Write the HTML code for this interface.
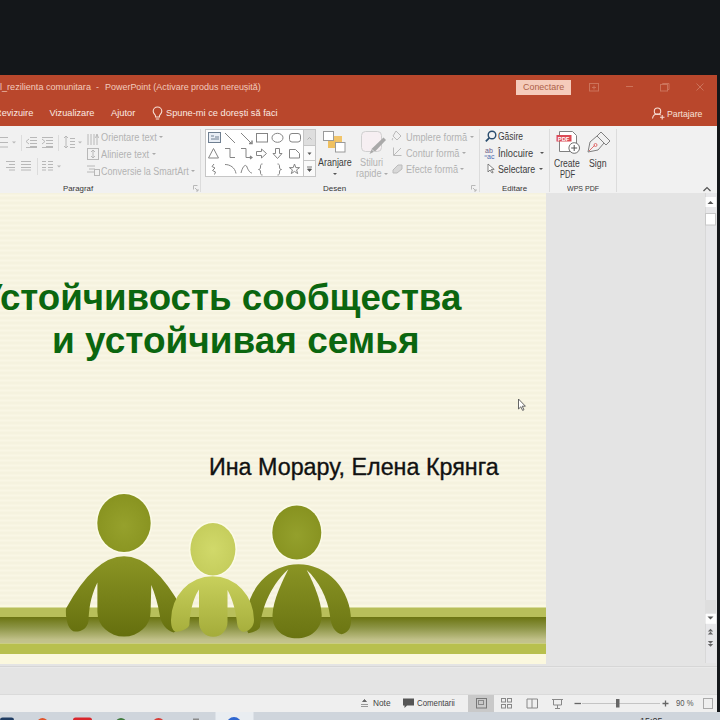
<!DOCTYPE html>
<html><head><meta charset="utf-8">
<style>
*{margin:0;padding:0;box-sizing:border-box}
html,body{width:720px;height:720px;overflow:hidden;background:#14171a;font-family:"Liberation Sans",sans-serif}
.a{position:absolute;white-space:nowrap}
#top{left:0;top:0;width:720px;height:75px;background:#14171a}
#orange{left:0;top:75px;width:717px;height:51px;background:#b9472c}
#ribbon{left:0;top:126px;width:717px;height:67px;background:#f1f1f1}
#panel{left:0;top:193px;width:717px;height:502px;background:#e4e4e4}
#slide{left:0;top:193px;width:546px;height:471px;background:repeating-linear-gradient(180deg,#f4f1dd 0px,#f9f6e5 2.5px,#f4f1dd 5px)}
#status{left:0;top:695px;width:717px;height:17px;background:#efefef}
#taskbar{left:0;top:712px;width:720px;height:8px;background:#cfd5dc}
#rightedge{left:717px;top:0;width:3px;height:712px;background:#14171a}
.tt{color:#f3d2c6;font-size:10.5px}
.tab{color:#fbe9e3;font-size:11px}
.rb{color:#a6a6a6;font-size:10px}
.rl{color:#444;font-size:9px}
.rd{color:#333;font-size:10px}
.t{position:absolute;white-space:nowrap;line-height:10px;font-size:10px;transform-origin:0 0}
.g{color:#b3b3b3}
.k{color:#3d3d3d}
.l8{font-size:8px;line-height:8px;color:#363636}
.dd{position:absolute;width:0;height:0;border-left:2px solid transparent;border-right:2px solid transparent;border-top:2px solid #aaa}
.dk{border-top-color:#555}
.sep{position:absolute;width:1px;background:#dadada}
</style></head><body>
<div class="a" id="top"></div>
<div class="a" id="orange"></div>
<div class="a" id="ribbon"></div>
<div class="a" id="panel"></div>
<div class="a" id="slide"></div>
<div class="a" id="status"></div>
<div class="a" id="taskbar"></div>
<div class="a" id="rightedge"></div>

<!-- title bar -->
<div class="t" style="left:0;top:82.5px;font-size:9px;line-height:9px;color:#f2cbbd;transform:scaleX(1.01)">l_rezilienta comunitara</div>
<div class="t" style="left:96px;top:82.5px;font-size:9px;line-height:9px;color:#f2cbbd">-</div>
<div class="t" style="left:104.5px;top:82.5px;font-size:9px;line-height:9px;color:#f2cbbd;transform:scaleX(0.995)">PowerPoint (Activare produs nereușită)</div>
<div class="a" style="left:516px;top:80px;width:55px;height:14.5px;background:#f5cbbb"></div>
<div class="t" style="left:523px;top:83px;font-size:9px;line-height:9px;color:#ad5f48;transform:scaleX(0.99)">Conectare</div>
<svg class="a" style="left:580px;top:76px" width="137" height="50" viewBox="580 76 137 50">
<g stroke="#cc735a" fill="none" stroke-width="1">
<rect x="589.5" y="83.5" width="9" height="7.5"/><path d="M592,87.5h4M594,85.5v4"/>
<path d="M626,86.5h7"/>
<rect x="660.5" y="84.5" width="7" height="6.5"/><path d="M662.5,84.5v-1h6.5v6h-1"/>
<path d="M696.5,83.5l7,7M703.5,83.5l-7,7"/>
</g>
<g stroke="#f7dcd2" fill="none" stroke-width="1.1">
<circle cx="657.5" cy="111.2" r="3.2"/>
<path d="M652.5,118.5c0.5,-3.5 2.5,-4.5 5,-4.5c1.5,0 2.5,0.3 3.2,1"/>
<path d="M660,117.2h4.5M662.2,115v4.5"/>
</g>
</svg>
<div class="t" style="left:666.5px;top:109.5px;font-size:9.2px;line-height:9.2px;color:#f8e2d9;transform:scaleX(0.95)">Partajare</div>

<!-- tabs -->
<div class="t" style="left:-5px;top:108.5px;font-size:9.2px;line-height:9.2px;color:#fbe9e2">Revizuire</div>
<div class="t" style="left:49.6px;top:108.5px;font-size:9.2px;line-height:9.2px;color:#fbe9e2">Vizualizare</div>
<div class="t" style="left:111px;top:108.5px;font-size:9.3px;line-height:9.3px;color:#fbe9e2">Ajutor</div>
<div class="t" style="left:166px;top:108.5px;font-size:9.25px;line-height:9.25px;color:#fbe9e2">Spune-mi ce dorești să faci</div>
<svg class="a" style="left:150px;top:104px" width="16" height="18" viewBox="150 104 16 18">
<path d="M157.5,107c-2.6,0 -4.3,2 -4.3,4.2c0,1.7 1,2.6 1.8,3.6c0.5,0.7 0.6,1.2 0.6,2.2h3.8c0,-1 0.1,-1.5 0.6,-2.2c0.8,-1 1.8,-1.9 1.8,-3.6c0,-2.2 -1.7,-4.2 -4.3,-4.2z M155.8,119h3.4" stroke="#f7e0d6" fill="none" stroke-width="1.1"/>
</svg>

<!-- ribbon: Paragraf -->
<svg class="a" style="left:0;top:126px" width="717" height="68" viewBox="0 126 717 68">
<g stroke="#b8b8b8" stroke-width="1" fill="none">
<!-- list icon -->
<path d="M0,137.5h8M0,142.5h8M0,147h8"/>
<!-- indent icons -->
<path d="M30,137.5h7M30,140.5h7M30,143.5h7M30,146.5h7M26,147.5h11"/>
<path d="M29,139l-3,2.5l3,2.5"/>
<path d="M42,137.5h11M46,140.5h7M46,143.5h7M46,146.5h7M42,147.5h11"/>
<path d="M42,139l3,2.5l-3,2.5"/>
<!-- line spacing -->
<path d="M66,136v12M64,138l2,-2l2,2M64,146l2,2l2,-2M70,138.5h5M70,141.5h5M70,144.5h5M70,147.5h5"/>
<!-- align right / justify -->
<path d="M6,161.5h9M9,164.5h6M6,167.5h9M9,170h6"/>
<path d="M21,161.5h10M21,164.5h10M21,167.5h10M21,170h10"/>
<!-- columns -->
<path d="M42,161.5h4M48,161.5h5M42,164.5h4M48,164.5h5M42,167.5h4M48,167.5h5M42,170h4M48,170h5"/>
<!-- orientare text icon -->
<path d="M88,134v11M91,134v11M94,134v11M97,136v9M95.5,138l1.5,-4l1.5,4"/>
<!-- aliniere text icon -->
<rect x="87.5" y="148.5" width="11" height="11"/>
<path d="M93,150v8M91,152l2,-2l2,2M91,156l2,2l2,-2"/>
<!-- conversie smartart icon -->
<path d="M87,166h8M89,169h6M87,172h8"/><rect x="94.5" y="169.5" width="5" height="6"/>
<!-- launcher -->
<path d="M193.5,189.5v-4h4M195,188l3,3M198,189v2h-2"/>
<path d="M471.5,189.5v-4h4M473,188l3,3M476,189v2h-2"/>
</g>
<g fill="#b8b8b8"><path d="M12,141.5h4l-2,2z"/><path d="M78,141.5h4l-2,2z"/><path d="M57,165.5h4l-2,2z"/></g>
<!-- separators -->
<g fill="#dcdcdc">
<rect x="21" y="135" width="1" height="16"/><rect x="58" y="135" width="1" height="16"/><rect x="37" y="158" width="1" height="17"/>
<rect x="200" y="129" width="1" height="63"/><rect x="479" y="129" width="1" height="63"/><rect x="549" y="129" width="1" height="63"/><rect x="616" y="129" width="1" height="63"/>
</g>
<!-- shape gallery -->
<rect x="205.5" y="129.5" width="110" height="47" fill="#fff" stroke="#c6c6c6"/>
<rect x="303.5" y="129.5" width="12" height="16" fill="#dedede" stroke="#c6c6c6"/>
<rect x="303.5" y="145.5" width="12" height="15" fill="#fafafa" stroke="#c6c6c6"/>
<rect x="303.5" y="160.5" width="12" height="16" fill="#fafafa" stroke="#c6c6c6"/>
<path d="M307.5,139.5l2,-2l2,2" stroke="#b0b0b0" fill="none"/>
<path d="M307.5,152.5h4l-2,2.5z" fill="#555"/>
<path d="M307,167h5M307.5,169h4l-2,2.5z" stroke="#555" stroke-width="0.8" fill="#555"/>
<g stroke="#858585" stroke-width="1" fill="none">
<rect x="208.5" y="132.5" width="12" height="10" stroke="#6f7f91" fill="#e9eef5"/>
<path d="M211,136h3M215,137h4M211,139h8" stroke="#6f7f91"/>
<path d="M225,133l10,10"/>
<path d="M241,133l10,10"/><path d="M249,143.5h3v-3" stroke-width="1.5"/>
<rect x="256.5" y="133.5" width="11" height="8.5"/>
<ellipse cx="277.5" cy="137.8" rx="5.5" ry="4.5"/>
<rect x="289.5" y="133.5" width="11" height="8.5" rx="2.5"/>
<path d="M213.5,148.5l-5,9.5h10z"/>
<path d="M225,148.5h5v9h5"/>
<path d="M241,148.5h5v9h5"/><path d="M250,156l2,1.5l-2,1.5" stroke-width="1.2"/>
<path d="M256.5,151.5h5v-2.5l5,4.5l-5,4.5v-2.5h-5z"/>
<path d="M275.5,148.5h4v5h2.5l-4.5,5l-4.5,-5h2.5z"/>
<path d="M289.5,149.5h6l4,4v4.5h-10z"/>
<path d="M214,164l-2,2.5l3,1.5l-2.5,2.5l3,1.5l-1,2.5"/>
<path d="M225,164.5c5,0 10,3 11,9"/>
<path d="M241,173c2,-8 5,-9 6,-6c1,3 3,6 5,6"/>
<path d="M262.5,164c-2,0 -2,1 -2,3c0,2 -1,2.5 -2,2.5c1,0 2,0.5 2,2.5c0,2 0,3 2,3"/>
<path d="M277.5,164c2,0 2,1 2,3c0,2 1,2.5 2,2.5c-1,0 -2,0.5 -2,2.5c0,2 0,3 -2,3"/>
<path d="M294.5,164l1.3,3.6h3.8l-3,2.3l1.1,3.7l-3.2,-2.2l-3.2,2.2l1.1,-3.7l-3,-2.3h3.8z"/>
</g>
<!-- Aranjare icon -->
<rect x="332" y="136" width="10" height="8" fill="#f2c56a"/><rect x="328" y="140" width="8" height="8" fill="#efc060"/>
<rect x="323.5" y="131.5" width="10" height="9" fill="#fff" stroke="#9a9a9a"/>
<rect x="335.5" y="142.5" width="9.5" height="9.5" fill="#fff" stroke="#9a9a9a"/>
<!-- Stiluri rapide icon -->
<rect x="361.5" y="131.5" width="20" height="20" rx="4" fill="#f6eff2" stroke="#d0d0d0"/>
<path d="M383.5,137.5l2.5,2.5l-10.5,11l-6,3l2.5,-5.5z" fill="#a9a9a9"/><path d="M372,149.5l3,3" stroke="#f1f1f1" stroke-width="0.8"/>
<!-- Umplere / contur / efecte icons -->
<g stroke="#bbbbbb" fill="none">
<path d="M396,131l5,5l-4,4l-4,-4z M393,138c-1,1 -1,2 0,2"/>
<path d="M393.5,147.5v8h8M394,155l7,-7"/>
<path d="M393,170l5,-5h4v4l-5,4h-4z" fill="#d8d8d8"/>
</g>
<!-- Editare icons -->
<circle cx="492" cy="135" r="3.8" fill="none" stroke="#2a4d6e" stroke-width="1.4"/>
<path d="M489.3,137.8l-3.5,3.5" stroke="#2a4d6e" stroke-width="1.8"/>
<text x="485" y="153" font-size="7" fill="#6a5a8a" font-family="Liberation Sans">ab</text>
<text x="487" y="158.5" font-size="7" fill="#4a6ab0" font-family="Liberation Sans">ac</text>
<path d="M484.5,156h2.5" stroke="#4a6ab0" stroke-width="0.8"/>
<path d="M488,164v8l2,-2l2,3l1.2,-0.6l-2,-3h3z" fill="#fff" stroke="#666" stroke-width="0.8"/>
<!-- Create PDF icon -->
<path d="M559.5,131.5h13l4,4v16h-17z" fill="#fff" stroke="#808080"/>
<rect x="556.5" y="135" width="15" height="6.5" fill="#dc4a55"/>
<text x="557.8" y="140.6" font-size="5.8" fill="#fff" font-family="Liberation Sans" font-weight="bold">PDF</text>
<circle cx="574.2" cy="148" r="5.3" fill="#fff" stroke="#707070"/>
<path d="M574.2,145v6M571.2,148h6" stroke="#555"/>
<!-- Sign icon -->
<path d="M596,131.5l-4,4l4,0l0,0z" fill="none"/>
<g stroke="#808080" fill="none">
<path d="M601,132l9,9l-4,4l-9,-9z"/>
<path d="M597,136l-7,6l-2,10l10,-2l6,-7"/>
</g>
<path d="M589,151l6,-6" stroke="#e07070"/><circle cx="595.5" cy="145" r="1.5" fill="none" stroke="#e07070"/>
<!-- collapse arrow -->
<path d="M703.5,191l3.5,-3.5l3.5,3.5" stroke="#555" fill="none" stroke-width="1.2"/>
</svg>
<div class="t g" style="left:101px;top:133px;transform:scaleX(0.92)">Orientare text</div>
<div class="t g" style="left:101px;top:150.3px;transform:scaleX(0.92)">Aliniere text</div>
<div class="t g" style="left:101px;top:167.3px;transform:scaleX(0.897)">Conversie la SmartArt</div>
<div class="dd" style="left:159px;top:136px"></div>
<div class="dd" style="left:152px;top:153px"></div>
<div class="dd" style="left:191px;top:170px"></div>
<div class="t l8" style="left:63px;top:184.5px;transform:scaleX(0.98)">Paragraf</div>
<div class="t k" style="left:317.5px;top:157.5px;transform:scaleX(0.894)">Aranjare</div>
<div class="dd dk" style="left:333px;top:173px"></div>
<div class="t g" style="left:359.5px;top:158px;transform:scaleX(0.92)">Stiluri</div>
<div class="t g" style="left:355.5px;top:169px;transform:scaleX(0.92)">rapide</div>
<div class="dd" style="left:384px;top:173px"></div>
<div class="t l8" style="left:323px;top:184.5px">Desen</div>
<div class="t g" style="left:405.5px;top:133px;transform:scaleX(0.926)">Umplere formă</div>
<div class="t g" style="left:405.5px;top:148.5px;transform:scaleX(0.916)">Contur formă</div>
<div class="t g" style="left:405.5px;top:164.5px;transform:scaleX(0.917)">Efecte formă</div>
<div class="dd" style="left:470px;top:136px"></div>
<div class="dd" style="left:462px;top:152px"></div>
<div class="dd" style="left:460px;top:168px"></div>
<div class="t k" style="left:498px;top:132px;transform:scaleX(0.85)">Găsire</div>
<div class="t k" style="left:498px;top:148.5px;transform:scaleX(0.93)">Înlocuire</div>
<div class="t k" style="left:498px;top:165px;transform:scaleX(0.88)">Selectare</div>
<div class="dd dk" style="left:540px;top:152px"></div>
<div class="dd dk" style="left:539px;top:168px"></div>
<div class="t l8" style="left:501.5px;top:184.5px;transform:scaleX(0.99)">Editare</div>
<div class="t k" style="left:553.5px;top:159px;transform:scaleX(0.857)">Create</div>
<div class="t k" style="left:559.5px;top:170px;transform:scaleX(0.76)">PDF</div>
<div class="t k" style="left:588.5px;top:159px;transform:scaleX(0.875)">Sign</div>
<div class="t l8" style="left:567px;top:184.5px;transform:scaleX(0.88)">WPS PDF</div>



<!-- scrollbar -->
<svg class="a" style="left:704px;top:193px" width="13" height="470" viewBox="704 193 13 470">
<rect x="705" y="193" width="11" height="470" fill="#e7e7e9"/>
<path d="M705.5,193v470" stroke="#d8d8d8"/>
<rect x="705.5" y="197" width="10.5" height="10" fill="#fdfdfd"/>
<path d="M707.5,204h6l-3,-3z" fill="#555"/>
<rect x="705.5" y="213.5" width="10" height="11.5" fill="#fff" stroke="#c8c8c8"/>
<rect x="705" y="600" width="11" height="13.5" fill="#dedede"/>
<rect x="705.5" y="613.8" width="10.5" height="10" fill="#fdfdfd"/>
<path d="M707.5,616.5h6l-3,3z" fill="#555"/>
<path d="M707.8,631.5h5.4l-2.7,-2.7zM707.8,634.5h5.4l-2.7,-2.7z" fill="#666"/>
<path d="M707.8,641h5.4l-2.7,2.7zM707.8,644h5.4l-2.7,2.7z" fill="#666"/>
</svg>

<!-- status bar -->
<div class="a" style="left:0;top:666px;width:717px;height:1px;background:#d6d6d6"></div>
<div class="a" style="left:0;top:667px;width:717px;height:1px;background:#e9e9e9"></div>
<div class="a" style="left:0;top:694px;width:717px;height:1px;background:#dadada"></div>
<div class="a" style="left:468px;top:694.5px;width:26px;height:17.5px;background:#c9c9c9"></div>
<svg class="a" style="left:350px;top:692px" width="367" height="20" viewBox="350 692 367 20">
<g stroke="#6a6a6a" fill="none" stroke-width="1">
<path d="M361,704.5h7M361,706.5h7" stroke="#999"/>
<path d="M362.5,702l2,-2.5l2,2.5" fill="#666" stroke="#666"/>
<rect x="476.5" y="698.5" width="10" height="9.5" stroke="#777"/><rect x="478.5" y="700.5" width="5" height="4" stroke="#888"/>
<rect x="501.5" y="698.5" width="4" height="3.5" stroke="#888"/><rect x="507.5" y="698.5" width="4" height="3.5" stroke="#888"/>
<rect x="501.5" y="704.5" width="4" height="3.5" stroke="#888"/><rect x="507.5" y="704.5" width="4" height="3.5" stroke="#888"/>
<path d="M527,699v9h5v-9zM532,699h5.5v9h-5.5" stroke="#888"/>
<path d="M552,699.5h11M553.5,699.5v5.5h8v-5.5M557.5,705v3M555,708.5h5" stroke="#888"/>
<path d="M574.5,703.5h6.5" stroke="#666" stroke-width="1.3"/>
<path d="M582,703.5h78" stroke="#c4c4c4"/>
<path d="M662.5,703.5h6M665.5,700.5v6" stroke="#666" stroke-width="1.3"/>
<path d="M703.5,698.5h3M703.5,698.5v3M712.5,698.5h-3M712.5,698.5v3M703.5,708.5h3M703.5,708.5v-3M712.5,708.5h-3M712.5,708.5v-3" stroke="#777"/>
<rect x="703.5" y="698.5" width="9" height="10" stroke="#aaa"/>
</g>
<rect x="616" y="699" width="3.5" height="8.5" fill="#666"/>
<path d="M403,698.5h11v7h-7l-2.5,2.5v-2.5h-1.5z" fill="#555"/>
</svg>
<div class="t" style="left:372.5px;top:699px;font-size:9px;line-height:9px;color:#444;transform:scaleX(0.92)">Note</div>
<div class="t" style="left:417px;top:699px;font-size:9px;line-height:9px;color:#444;transform:scaleX(0.87)">Comentarii</div>
<div class="t" style="left:675.5px;top:699px;font-size:9px;line-height:9px;color:#555;transform:scaleX(0.85)">90 %</div>

<!-- taskbar -->
<svg class="a" style="left:0;top:712px" width="717" height="8" viewBox="0 712 717 8">
<rect x="215.5" y="712" width="38" height="8" fill="#e9edf1"/>
<rect x="0" y="717.6" width="14" height="6" rx="2.5" fill="#1f3c62"/>
<circle cx="42.5" cy="723.5" r="5.5" fill="#e0542a"/>
<rect x="73" y="717.4" width="19" height="6" rx="2.5" fill="#d9262c"/>
<circle cx="121" cy="723.5" r="5.5" fill="#3f7a3c"/>
<circle cx="158.5" cy="724.5" r="6.5" fill="#d63c36"/>
<rect x="193" y="718.5" width="6" height="4" fill="#8a8a8a"/>
<circle cx="234" cy="724.5" r="7.5" fill="#2e66d0"/>
<text x="640" y="724" font-size="9" fill="#333" font-family="Liberation Sans">15:05</text>
</svg>

<!-- slide text -->
<div class="a" style="left:-20.6px;top:277.3px;font-size:36.7px;font-weight:bold;color:#0b660f">Устойчивость сообщества</div>
<div class="a" style="left:52px;top:320px;font-size:37px;font-weight:bold;color:#0b660f">и устойчивая семья</div>
<div class="a" style="left:209px;top:454px;font-size:23.3px;color:#111;-webkit-text-stroke:0.35px #111">Ина Морару, Елена Крянга</div>


<!-- people graphic -->
<svg class="a" style="left:0;top:0" width="720" height="720" viewBox="0 0 720 720">
<defs>
<linearGradient id="band" x1="0" y1="0" x2="0" y2="1">
<stop offset="0" stop-color="#6b7411"/><stop offset="0.4" stop-color="#8c9445"/><stop offset="0.85" stop-color="#c0c088"/><stop offset="1" stop-color="#c4c490"/>
</linearGradient>
<linearGradient id="b1" x1="0" y1="0" x2="0" y2="1">
<stop offset="0" stop-color="#8b9524"/><stop offset="1" stop-color="#656f0e"/>
</linearGradient>
<linearGradient id="b3" x1="0" y1="0" x2="0" y2="1">
<stop offset="0" stop-color="#8a9424"/><stop offset="1" stop-color="#6a7412"/>
</linearGradient>
<linearGradient id="b2" x1="0" y1="0" x2="0" y2="1">
<stop offset="0" stop-color="#c8d05c"/><stop offset="1" stop-color="#a4ac3a"/>
</linearGradient>
<radialGradient id="h1" cx="0.5" cy="0.55" r="0.6">
<stop offset="0" stop-color="#96a12c"/><stop offset="1" stop-color="#87921f"/>
</radialGradient>
<radialGradient id="h3" cx="0.5" cy="0.55" r="0.6">
<stop offset="0" stop-color="#94a02c"/><stop offset="1" stop-color="#86911f"/>
</radialGradient>
<radialGradient id="h2" cx="0.5" cy="0.5" r="0.6">
<stop offset="0" stop-color="#d1d96a"/><stop offset="1" stop-color="#c3cb5a"/>
</radialGradient>
</defs>
<rect x="0" y="605" width="546" height="2.5" fill="#fbf9e2"/>
<rect x="0" y="607.5" width="546" height="9.5" fill="#b8bf5a"/>
<rect x="0" y="617" width="546" height="26.5" fill="url(#band)"/>
<rect x="0" y="643.5" width="546" height="10.5" fill="#b8c04e"/>
<rect x="0" y="654" width="546" height="10" fill="#fbf8de"/>
<ellipse cx="124" cy="523" rx="28.2" ry="30.5" fill="#fcfbe8"/>
<ellipse cx="124" cy="523" rx="26.7" ry="29" fill="url(#h1)"/>
<path fill="url(#b1)" d="M97.4,582.6 L97.4,612 A26.6,24.5 0 0 0 150.6,612 L151.3,585 C155,594 158,604 159.5,614 C161,624 166,630 173.8,632.5 C179,629 182,620 182,608.4 Q124,504.2 66,608.4 C65.2,618 68,631.6 75.6,631.6 C82,631.6 87.5,628 88.5,621 C89,610 90,598 97.4,582.6 Z"/>
<ellipse cx="296.8" cy="532.5" rx="26" ry="28.6" fill="#fcfbe8"/>
<ellipse cx="296.8" cy="532.5" rx="24.5" ry="27.1" fill="url(#h3)"/>
<path fill="url(#b3)" d="M288.3,569.2 C283,580 273,600 272.5,615 C272,630 284,638.3 296.7,638.3 C310,638.3 321.7,630 321.7,615 C321.5,600 312,580 306.7,570 C318,580 328,598 330,616 C331,626 335,633 341.7,634.2 C348,633 351,628 351,621 A52.5,56.8 0 0 0 246,621 C246,627 247,631 248.3,633.3 C254,632 259,630 260,626.7 C261.5,612 268,588 288.3,569.2 Z"/>
<ellipse cx="212.9" cy="549.2" rx="24" ry="27.7" fill="#fcfbe8"/>
<ellipse cx="212.9" cy="549.2" rx="22.5" ry="26.2" fill="url(#h2)"/>
<path fill="url(#b2)" d="M199,589.4 L199,622 A14.25,14.7 0 0 0 227.5,622 L227.5,590.1 C233,600 236,612 237.2,624 C238,629 241,632 244.2,631.8 C250,631 254,626 254,620 A41.5,43.8 0 0 0 171,620 C171,628 173.5,632 176.8,631.8 C181,631.5 188,629 189.3,625 C190,614 192,600 199,589.4 Z"/>
</svg>

<!-- cursor -->
<svg class="a" style="left:512px;top:394px" width="20" height="22" viewBox="512 394 20 22">
<path d="M518.5,399v10l2.3,-2.2l1.8,3.6l1.4,-0.7l-1.8,-3.5h3.2z" fill="#fff" stroke="#555" stroke-width="0.9" stroke-linejoin="round"/>
</svg>
</body></html>
